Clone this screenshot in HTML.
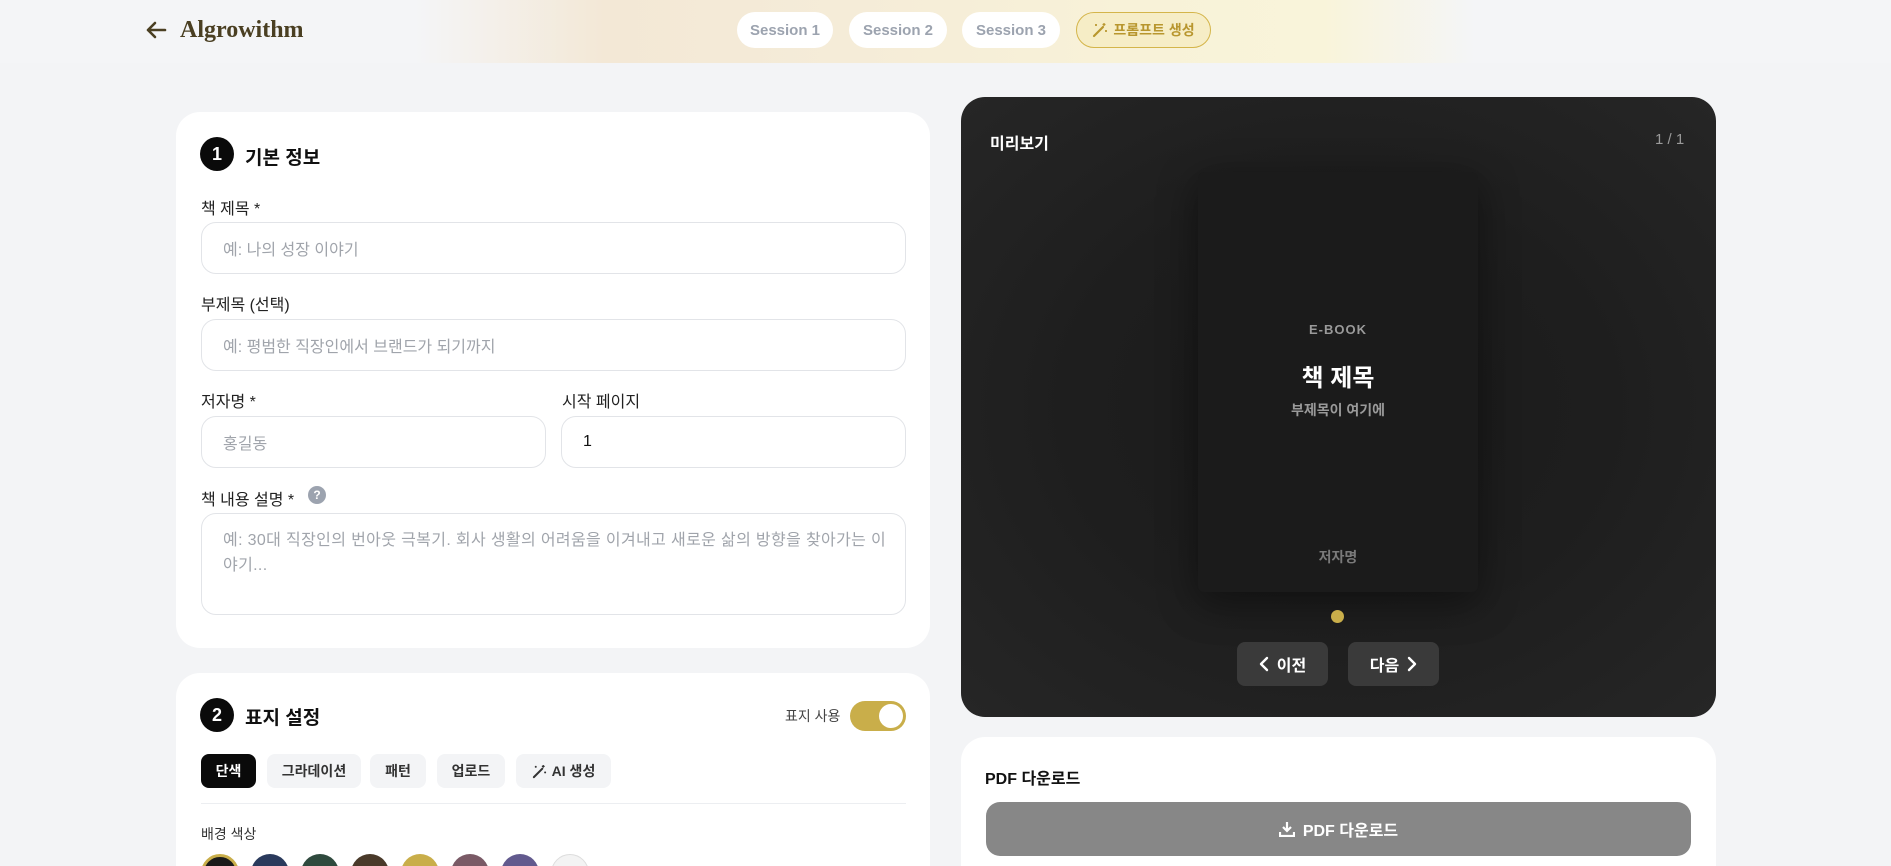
<!DOCTYPE html>
<html style="width:1891px;height:866px;overflow:hidden"><head><meta charset="utf-8"><style>
*{box-sizing:border-box;margin:0;padding:0}
html,body{overflow:hidden}
body{width:1891px;height:866px;overflow:hidden;background:#f3f4f6;font-family:"Liberation Sans","Noto Sans CJK KR",sans-serif;position:relative;color:#111}
.abs{position:absolute}
.hdr{left:0;top:0;width:1891px;height:63px;background:linear-gradient(90deg,#f4f5f7 0%,#f4f5f7 22%,#f3e8d6 32%,#f5ecd8 45%,#f8f2d8 60%,#f9f4da 70%,#f4f5f7 78%,#f4f5f7 100%)}
.pill{top:12px;height:36px;border-radius:18px;background:#fff;color:#9ca3af;font-weight:700;font-size:15px;display:flex;align-items:center;justify-content:center}
.card{background:#fff;border-radius:24px}
.num{width:34px;height:34px;border-radius:50%;background:#0a0a0a;color:#fff;font-weight:700;font-size:18px;display:flex;align-items:center;justify-content:center}
.h{font-size:19px;font-weight:700}
.lbl{font-size:16px;color:#222}
.inp{border:1px solid #e2e4e8;border-radius:15px;background:#fff;font-size:16px;color:#a0a4ab;padding-left:21px;display:flex;align-items:center}
.tab{top:754px;height:34px;border-radius:8px;background:#f3f4f6;font-size:14px;font-weight:700;color:#333;display:flex;align-items:center;justify-content:center;gap:5px}
.sw{top:854px;width:38px;height:38px;border-radius:50%}
.btn{top:642px;height:44px;width:91px;border-radius:8px;background:#3a3a3a;color:#fff;font-weight:700;font-size:16px;display:flex;align-items:center;justify-content:center;gap:8px}
</style></head><body>
<div class="abs hdr"></div>
<svg class="abs" style="left:145px;top:20px" width="22" height="20" viewBox="0 0 22 20"><path d="M20 10H3M10 3L3 10l7 7" stroke="#4a3f22" stroke-width="2.6" fill="none" stroke-linecap="round" stroke-linejoin="round"/></svg>
<div class="abs" style="left:180px;top:17px;font-family:'Liberation Serif',serif;font-weight:700;font-size:24px;color:#4a3f22">Algrowithm</div>
<div class="abs pill" style="left:737px;width:96px">Session 1</div>
<div class="abs pill" style="left:849px;width:98px">Session 2</div>
<div class="abs pill" style="left:962px;width:98px">Session 3</div>
<div class="abs pill" style="left:1076px;width:135px;background:#f6edc6;border:1px solid #d4b54a;color:#b8962e;font-size:14px;gap:5px"><svg width="16" height="16" viewBox="0 0 16 16"><path d="M2 14L11 5" stroke="#b8962e" stroke-width="2.2" stroke-linecap="round"/><path d="M12 1v3M10.5 2.5h3M4 2v2M3 3h2M14 8v2M13 9h2" stroke="#b8962e" stroke-width="1.3"/></svg>프롬프트 생성</div>

<div class="abs card" style="left:176px;top:112px;width:754px;height:536px"></div>
<div class="abs num" style="left:200px;top:137px">1</div>
<div class="abs h" style="left:245px;top:143px">기본 정보</div>
<div class="abs lbl" style="left:201px;top:195px">책 제목 *</div>
<div class="abs inp" style="left:201px;top:222px;width:705px;height:52px">예: 나의 성장 이야기</div>
<div class="abs lbl" style="left:201px;top:291px">부제목 (선택)</div>
<div class="abs inp" style="left:201px;top:319px;width:705px;height:52px">예: 평범한 직장인에서 브랜드가 되기까지</div>
<div class="abs lbl" style="left:201px;top:388px">저자명 *</div>
<div class="abs lbl" style="left:562px;top:388px">시작 페이지</div>
<div class="abs inp" style="left:201px;top:416px;width:345px;height:52px">홍길동</div>
<div class="abs inp" style="left:561px;top:416px;width:345px;height:52px;color:#111">1</div>
<div class="abs lbl" style="left:201px;top:486px">책 내용 설명 *</div>
<div class="abs" style="left:308px;top:486px;width:18px;height:18px;border-radius:50%;background:#9ca3af;color:#fff;font-size:12px;font-weight:700;text-align:center;line-height:18px">?</div>
<div class="abs inp" style="left:201px;top:513px;width:705px;height:102px;align-items:flex-start;padding-top:14px;line-height:25px;padding-right:15px;letter-spacing:0.35px">예: 30대 직장인의 번아웃 극복기. 회사 생활의 어려움을 이겨내고 새로운 삶의 방향을 찾아가는 이야기...</div>

<div class="abs card" style="left:176px;top:673px;width:754px;height:193px;border-radius:24px 24px 0 0"></div>
<div class="abs num" style="left:200px;top:698px">2</div>
<div class="abs h" style="left:245px;top:703px">표지 설정</div>
<div class="abs" style="left:785px;top:706px;font-size:14px;color:#444">표지 사용</div>
<div class="abs" style="left:850px;top:701px;width:56px;height:30px;border-radius:15px;background:#c9ae4a"><div class="abs" style="right:3px;top:3px;width:24px;height:24px;border-radius:50%;background:#fff"></div></div>
<div class="abs tab" style="left:201px;width:55px;background:#0a0a0a;color:#fff">단색</div>
<div class="abs tab" style="left:267px;width:94px">그라데이션</div>
<div class="abs tab" style="left:370px;width:56px">패턴</div>
<div class="abs tab" style="left:437px;width:68px">업로드</div>
<div class="abs tab" style="left:516px;width:95px"><svg width="15" height="15" viewBox="0 0 16 16"><path d="M2 14L11 5" stroke="#333" stroke-width="2.2" stroke-linecap="round"/><path d="M12 1v3M10.5 2.5h3M4 2v2M3 3h2M14 8v2M13 9h2" stroke="#333" stroke-width="1.3"/></svg>AI 생성</div>
<div class="abs" style="left:201px;top:803px;width:705px;height:1px;background:#eceef1"></div>
<div class="abs" style="left:201px;top:824px;font-size:14px;color:#333">배경 색상</div>
<div style="position:absolute;left:0;top:850px;width:1891px;height:16px;overflow:hidden">
<div class="abs sw" style="top:4px;left:201px;background:#1a1a1a;border:3px solid #c9ae4a"></div>
<div class="abs sw" style="top:4px;left:251px;background:#2a3a5c"></div>
<div class="abs sw" style="top:4px;left:301px;background:#2f4a3e"></div>
<div class="abs sw" style="top:4px;left:351px;background:#4a3a2a"></div>
<div class="abs sw" style="top:4px;left:401px;background:#c9ae4a"></div>
<div class="abs sw" style="top:4px;left:451px;background:#7a5a66"></div>
<div class="abs sw" style="top:4px;left:501px;background:#625a8e"></div>
<div class="abs sw" style="top:4px;left:551px;background:#f3f3f3;border:1px solid #ddd"></div>
</div>

<div class="abs" style="left:961px;top:97px;width:755px;height:620px;border-radius:24px;background:radial-gradient(ellipse at 50% 50%,#1a1a1a 0%,#1e1e1e 50%,#262626 100%)"></div>
<div class="abs" style="left:990px;top:130px;color:#fff;font-weight:700;font-size:16px">미리보기</div>
<div class="abs" style="left:1655px;top:131px;color:#9a9a9a;font-size:15px">1 / 1</div>
<div class="abs" style="left:1198px;top:172px;width:280px;height:420px;background:#1b1b1b;border-radius:6px;box-shadow:0 10px 40px rgba(0,0,0,.45)"></div>
<div class="abs" style="left:1198px;top:322px;width:280px;text-align:center;color:#9a9a9a;font-size:13px;font-weight:700;letter-spacing:1px">E-BOOK</div>
<div class="abs" style="left:1198px;top:358px;width:280px;text-align:center;color:#fff;font-size:24px;font-weight:700">책 제목</div>
<div class="abs" style="left:1198px;top:400px;width:280px;text-align:center;color:#9a9a9a;font-size:14px;font-weight:700">부제목이 여기에</div>
<div class="abs" style="left:1198px;top:547px;width:280px;text-align:center;color:#7a7a7a;font-size:14px;font-weight:700">저자명</div>
<div class="abs" style="left:1331px;top:610px;width:13px;height:13px;border-radius:50%;background:#c9ae4a"></div>
<div class="abs btn" style="left:1237px"><svg width="10" height="16" viewBox="0 0 10 16"><path d="M8 2L2 8l6 6" stroke="#fff" stroke-width="2.4" fill="none" stroke-linecap="round" stroke-linejoin="round"/></svg>이전</div>
<div class="abs btn" style="left:1348px">다음<svg width="10" height="16" viewBox="0 0 10 16"><path d="M2 2l6 6-6 6" stroke="#fff" stroke-width="2.4" fill="none" stroke-linecap="round" stroke-linejoin="round"/></svg></div>

<div class="abs card" style="left:961px;top:737px;width:755px;height:129px;border-radius:24px 24px 0 0"></div>
<div class="abs" style="left:985px;top:765px;font-size:16px;font-weight:700">PDF 다운로드</div>
<div class="abs" style="left:986px;top:802px;width:705px;height:54px;border-radius:14px;background:#878787;color:#fff;font-weight:700;font-size:16px;display:flex;align-items:center;justify-content:center;gap:8px"><svg width="16" height="16" viewBox="0 0 16 16"><path d="M8 1v9M4 6l4 4 4-4M1 11v4h14v-4" stroke="#fff" stroke-width="2.2" fill="none"/></svg>PDF 다운로드</div>
</body></html>
